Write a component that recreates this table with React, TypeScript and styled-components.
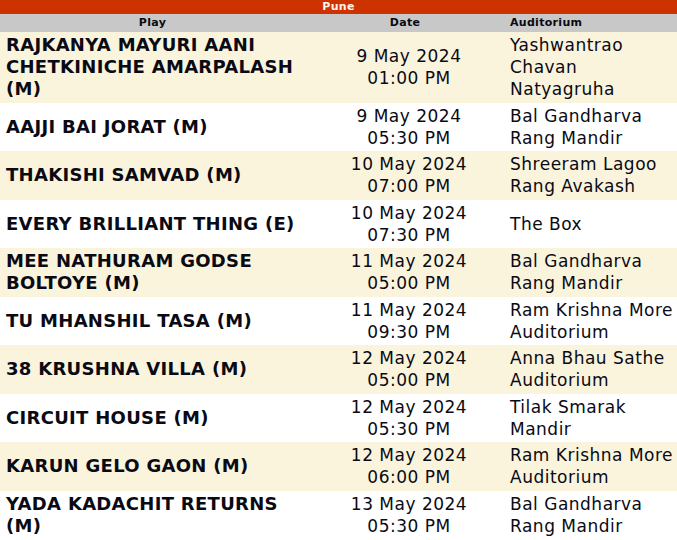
import styled, { createGlobalStyle } from "styled-components";

const GlobalStyle = createGlobalStyle`
    body {
        margin: 0;
        background: #ffffff;
        font-family: "DejaVu Sans", Verdana, sans-serif;
    }
`;

const Schedule = styled.table`
    width: 677px;
    border-collapse: collapse;
    table-layout: fixed;
    color: #0a0a14;
`;

const CityRow = styled.th`
    background-color: #cc3300;
    color: #fff4ee;
    font-size: 11px;
    font-weight: 700;
    height: 14px;
    padding: 0;
    line-height: 14px;
    text-align: center;
    letter-spacing: 0.3px;
`;

const HeadCell = styled.th<{ $align?: string }>`
    background-color: #c8c8c8;
    font-size: 11px;
    font-weight: 700;
    height: 18px;
    padding: 0 5px;
    line-height: 18px;
    text-align: ${(p) => p.$align || "center"};
    letter-spacing: 0.3px;
`;

const Row = styled.tr<{ $shaded: boolean }>`
    background-color: ${(p) => (p.$shaded ? "#faf4dd" : "#ffffff")};
`;

const PlayCell = styled.td`
    font-size: 18px;
    font-weight: 700;
    line-height: 22px;
    letter-spacing: 0.3px;
    padding: 2px 1px 2.5px 6px;
    vertical-align: middle;
`;

const DateCell = styled.td`
    font-size: 17px;
    line-height: 22px;
    letter-spacing: 0.5px;
    padding: 2px 0 2.5px 8px;
    text-align: center;
    vertical-align: middle;
`;

const VenueCell = styled.td`
    font-size: 17px;
    line-height: 22px;
    letter-spacing: 0.5px;
    padding: 2px 0 2.5px 5px;
    vertical-align: middle;
`;

const shows = [
    { play: "RAJKANYA MAYURI AANI CHETKINICHE AMARPALASH (M)", date: "9 May 2024", time: "01:00 PM", venue: "Yashwantrao Chavan Natyagruha" },
    { play: "AAJJI BAI JORAT (M)", date: "9 May 2024", time: "05:30 PM", venue: "Bal Gandharva Rang Mandir" },
    { play: "THAKISHI SAMVAD (M)", date: "10 May 2024", time: "07:00 PM", venue: "Shreeram Lagoo Rang Avakash" },
    { play: "EVERY BRILLIANT THING (E)", date: "10 May 2024", time: "07:30 PM", venue: "The Box" },
    { play: "MEE NATHURAM GODSE BOLTOYE (M)", date: "11 May 2024", time: "05:00 PM", venue: "Bal Gandharva Rang Mandir" },
    { play: "TU MHANSHIL TASA (M)", date: "11 May 2024", time: "09:30 PM", venue: "Ram Krishna More Auditorium" },
    { play: "38 KRUSHNA VILLA (M)", date: "12 May 2024", time: "05:00 PM", venue: "Anna Bhau Sathe Auditorium" },
    { play: "CIRCUIT HOUSE (M)", date: "12 May 2024", time: "05:30 PM", venue: "Tilak Smarak Mandir" },
    { play: "KARUN GELO GAON (M)", date: "12 May 2024", time: "06:00 PM", venue: "Ram Krishna More Auditorium" },
    { play: "YADA KADACHIT RETURNS (M)", date: "13 May 2024", time: "05:30 PM", venue: "Bal Gandharva Rang Mandir" },
];

export default function App() {
    return (
        <>
            <GlobalStyle />
            <Schedule>
                <colgroup>
                    <col style={{ width: 305 }} />
                    <col style={{ width: 200 }} />
                    <col />
                </colgroup>
                <thead>
                    <tr>
                        <CityRow colSpan={3}>Pune</CityRow>
                    </tr>
                    <tr>
                        <HeadCell>Play</HeadCell>
                        <HeadCell>Date</HeadCell>
                        <HeadCell $align="left">Auditorium</HeadCell>
                    </tr>
                </thead>
                <tbody>
                    {shows.map((s, i) => (
                        <Row key={s.play} $shaded={i % 2 === 0}>
                            <PlayCell>{s.play}</PlayCell>
                            <DateCell>
                                {s.date}
                                <br />
                                {s.time}
                            </DateCell>
                            <VenueCell>{s.venue}</VenueCell>
                        </Row>
                    ))}
                </tbody>
            </Schedule>
        </>
    );
}
